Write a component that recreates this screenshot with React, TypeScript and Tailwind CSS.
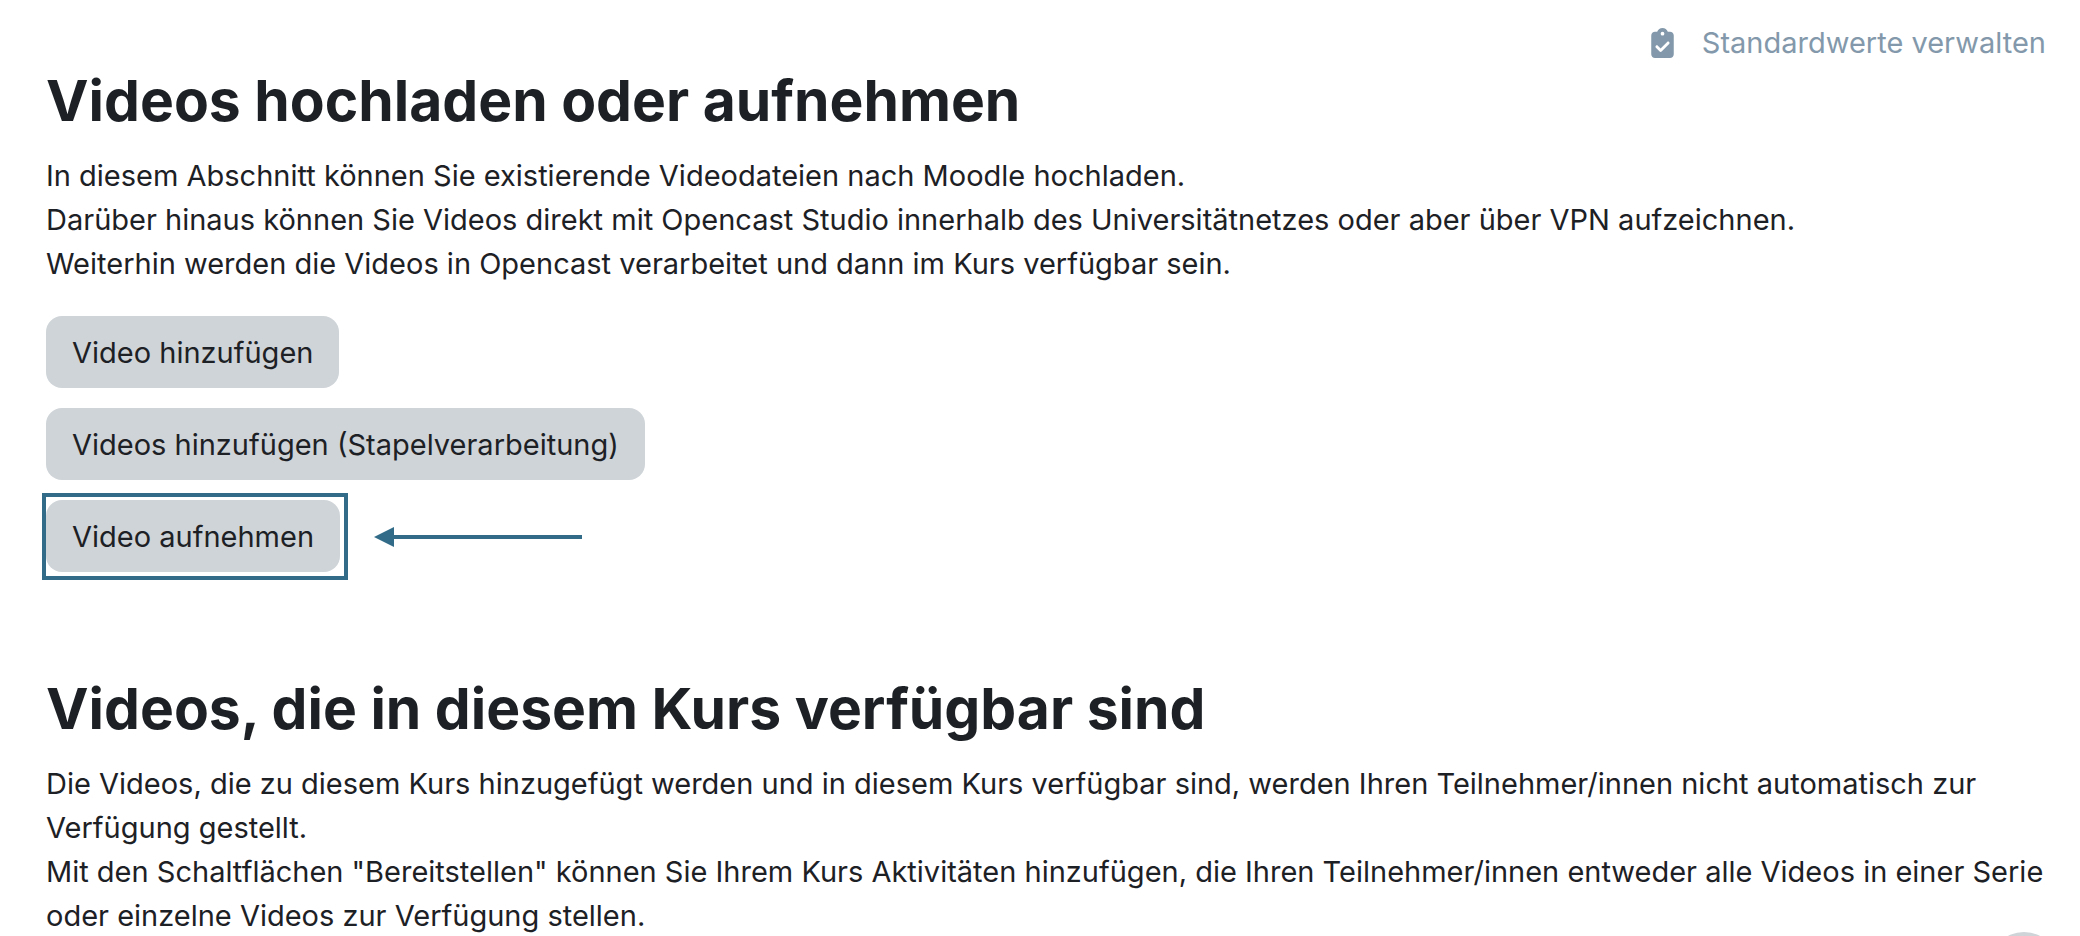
import React from 'react';
import { FaClipboardCheck } from 'react-icons/fa6';

function ActionButton({ label }: { label: string }) {
  return (
    <button
      type="button"
      className="h-[72px] px-[26px] pt-[2px] rounded-2xl bg-[#cfd4d8] text-left hover:bg-[#bfc5ca] cursor-pointer"
    >
      {label}
    </button>
  );
}

function SectionTitle({ children }: { children: React.ReactNode }) {
  return <h2 className="mb-[17px] text-[57px] leading-[72px] font-bold">{children}</h2>;
}

export default function App() {
  return (
    <div className="bg-white text-[#1d2125] text-[29px] leading-[44px] font-['Inter',sans-serif]">
      <header className="flex justify-end pt-[21px] pr-[34px]">
        <a href="#defaults" className="flex items-center gap-7 text-[#8399ab] hover:underline">
          <FaClipboardCheck className="w-[23px] h-[30px]" />
          Standardwerte verwalten
        </a>
      </header>

      <main className="pl-[46px] pr-6">
        <section>
          <SectionTitle>Videos hochladen oder aufnehmen</SectionTitle>
          <p>
            In diesem Abschnitt können Sie existierende Videodateien nach Moodle hochladen.
            <br />
            Darüber hinaus können Sie Videos direkt mit Opencast Studio innerhalb des Universitätnetzes oder aber über VPN aufzeichnen.
            <br />
            Weiterhin werden die Videos in Opencast verarbeitet und dann im Kurs verfügbar sein.
          </p>

          <div className="mt-[30px] flex flex-col items-start gap-5">
            <ActionButton label="Video hinzufügen" />
            <ActionButton label="Videos hinzufügen (Stapelverarbeitung)" />

            {/* highlighted action with its pointer */}
            <div className="flex items-center">
              <div className="relative">
                <ActionButton label="Video aufnehmen" />
                <div className="absolute -top-[7px] -bottom-2 -left-1 -right-2 border-4 border-[#316b88] pointer-events-none" />
              </div>
              <svg className="ml-[34px] w-[208px] h-[22px]" viewBox="0 0 208 22" fill="#316b88" aria-hidden="true">
                <path d="M0 12 20 2v20z" />
                <path d="M19 10h189v4H19z" />
              </svg>
            </div>
          </div>
        </section>

        <section className="mt-[101px]">
          <SectionTitle>Videos, die in diesem Kurs verfügbar sind</SectionTitle>
          <p>
            Die Videos, die zu diesem Kurs hinzugefügt werden und in diesem Kurs verfügbar sind, werden Ihren Teilnehmer/innen nicht automatisch zur Verfügung gestellt.
            <br />
            Mit den Schaltflächen "Bereitstellen" können Sie Ihrem Kurs Aktivitäten hinzufügen, die Ihren Teilnehmer/innen entweder alle Videos in einer Serie oder einzelne Videos zur Verfügung stellen.
          </p>
        </section>
      </main>

      <button
        type="button"
        aria-label="Hilfe"
        className="fixed right-5 -bottom-[68px] size-[72px] rounded-full bg-[#cfd4d8]"
      />
    </div>
  );
}
